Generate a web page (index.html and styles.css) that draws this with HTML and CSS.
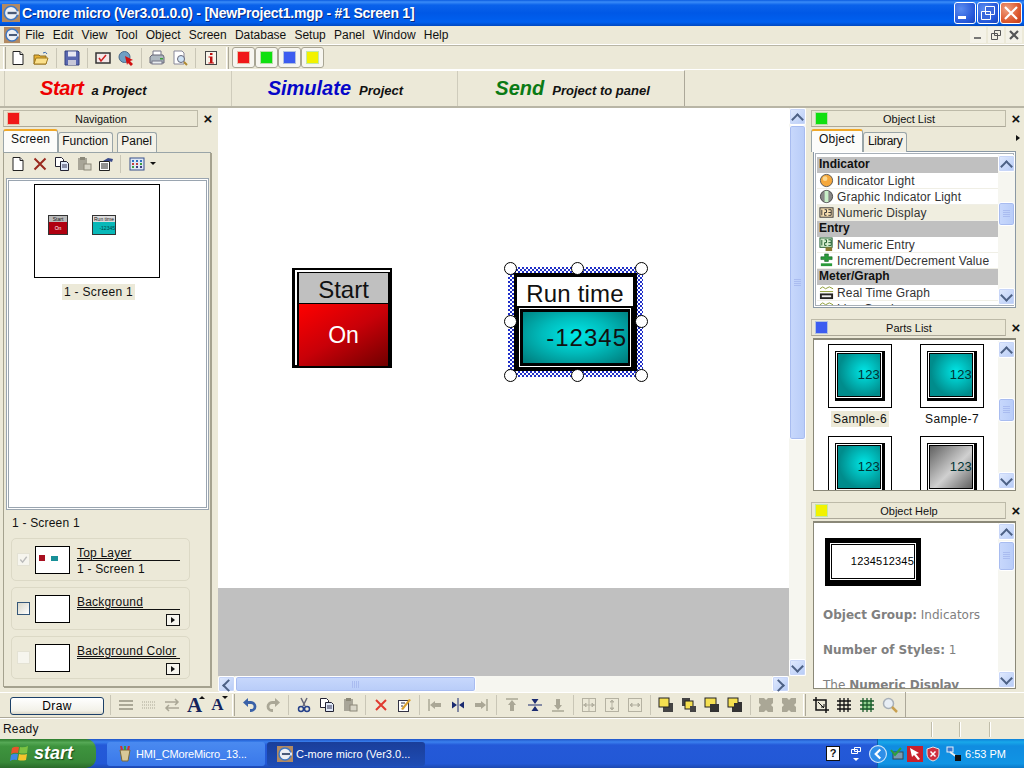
FILE: index.html
```html
<!DOCTYPE html>
<html>

<head>
	<title>C-more micro</title>
	<link rel="stylesheet" href="styles.css">
</head>

<body>
	<svg class="defs" width="0" height="0">
		<symbol id="i-cmore" viewBox="0 0 16 16"><rect width="16" height="16" fill="#b28a63"/><circle cx="8" cy="8" r="6" fill="#eef0f4" stroke="#3f78c4" stroke-width="1.500"/><rect x="4" y="6.500" width="11" height="3" fill="#dfe6f2"/><rect x="5" y="7" width="8" height="2" fill="#4a5a78"/></symbol>
		<symbol id="i-new" viewBox="0 0 16 16"><path d="M3 1.500h7l3 3v10H3z" fill="#fff" stroke="#222"/><path d="M10 1.500v3h3" fill="#ddd" stroke="#222"/></symbol>
		<symbol id="i-open" viewBox="0 0 16 16"><path d="M1 5h5l1 1h6v8H1z" fill="#e8b030" stroke="#8a6a20"/><path d="M3 8h12l-2 6H1z" fill="#fbe08a" stroke="#a07a20"/><path d="M10 3q3-2 4 1" fill="none" stroke="#3a6ab0"/></symbol>
		<symbol id="i-save" viewBox="0 0 16 16"><path d="M1 1h13l1 1v13H1z" fill="#5a68b0" stroke="#34407f"/><rect x="4" y="1.500" width="8" height="5" fill="#e8e8f2"/><rect x="4" y="10" width="8" height="5" fill="#c8c8d8"/></symbol>
		<symbol id="i-check" viewBox="0 0 16 16"><rect x="1" y="3" width="14" height="10" fill="#f3e8e8" stroke="#333" stroke-width="1.500"/><path d="M4 8l2 3 5-6" fill="none" stroke="#d02020" stroke-width="1.500"/></symbol>
		<symbol id="i-cursor" viewBox="0 0 16 16"><circle cx="6.500" cy="7" r="5.500" fill="#6f9fc4" stroke="#4a6a8a"/><path d="M7 6l8 4-3 1 3 3-2 2-3-3-1 2z" fill="#d01010"/></symbol>
		<symbol id="i-print" viewBox="0 0 16 16"><path d="M4 1h8v5H4z" fill="#fff" stroke="#778"/><path d="M1 7l2-2h11l1 2v6H1z" fill="#aeb8c0" stroke="#667"/><rect x="3" y="11" width="10" height="3" fill="#e8ecef" stroke="#778"/><rect x="11" y="8" width="3" height="1.500" fill="#3aa03a"/></symbol>
		<symbol id="i-preview" viewBox="0 0 16 16"><path d="M2 1h8l2 2v11H2z" fill="#fff" stroke="#889"/><circle cx="9" cy="9" r="3.500" fill="#cfe3f5" stroke="#667"/><path d="M12 12l3 3" stroke="#b08a30" stroke-width="2"/></symbol>
		<symbol id="i-info" viewBox="0 0 16 16"><rect x="2.500" y="1.500" width="11" height="13" fill="#f8f4ea" stroke="#444"/><rect x="7" y="3" width="2.500" height="2" fill="#c01010"/><path d="M5.500 6.500h4v6h1.500v1H5.500v-1H7v-5H5.500z" fill="#c01010"/></symbol>
		<symbol id="i-x" viewBox="0 0 16 16"><path d="M2.500 2.500l11 11M13.500 2.500l-11 11" stroke="#9a2a20" stroke-width="2"/></symbol>
		<symbol id="i-xred" viewBox="0 0 16 16"><path d="M3 3l10 10M13 3L3 13" stroke="#e03a30" stroke-width="2"/></symbol>
		<symbol id="i-copy" viewBox="0 0 16 16"><path d="M1.500 1.500h6l2 2v7h-8z" fill="#fff" stroke="#223"/><path d="M6.500 5.500h6l2 2v7h-8z" fill="#dfe8f8" stroke="#223"/><path d="M8 9h5M8 11h5" stroke="#335"/></symbol>
		<symbol id="i-paste" viewBox="0 0 16 16"><path d="M2 2h9v12H2z" fill="#a8a598"/><rect x="4" y="1" width="5" height="3" fill="#8b8878"/><rect x="8" y="8" width="7" height="6" fill="#d8d5c8" stroke="#8b8878"/></symbol>
		<symbol id="i-props" viewBox="0 0 16 16"><path d="M1.500 5.500h10v9h-10z" fill="#fff" stroke="#222"/><path d="M3 8h7M3 10h7M3 12h7" stroke="#222"/><path d="M5 5l5-3 5 1-1 3-3-1z" fill="#3a4a8a"/></symbol>
		<symbol id="i-view" viewBox="0 0 16 16"><rect x="1" y="2" width="14" height="12" fill="#dfe8f6" stroke="#38508a"/><path d="M3 5h2M7 5h2M11 5h2" stroke="#3070c0" stroke-width="2"/><path d="M3 8h2M7 8h2" stroke="#c04040" stroke-width="2"/><path d="M11 8h2M3 11h2" stroke="#40a040" stroke-width="2"/><path d="M7 11h2M11 11h2" stroke="#404080" stroke-width="2"/></symbol>
		<symbol id="i-lines" viewBox="0 0 16 16"><path d="M1 4h14M1 8h14M1 12h14" stroke="#aaa796" stroke-width="2"/></symbol>
		<symbol id="i-dots" viewBox="0 0 16 16"><path d="M1 5h14M1 8h14M1 11h14" stroke="#aaa796" stroke-dasharray="1 1"/></symbol>
		<symbol id="i-swap" viewBox="0 0 16 16"><path d="M1 5h13M11 2l3 3-3 3M15 11H2M5 8l-3 3 3 3" fill="none" stroke="#aaa796" stroke-width="1.500"/></symbol>
		<symbol id="i-undo" viewBox="0 0 16 16"><path d="M4 5.500h5a4 4 0 0 1 0 8H8" fill="none" stroke="#3a62a8" stroke-width="2.800"/><path d="M6 1v9L1 5.500z" fill="#3a62a8"/></symbol>
		<symbol id="i-redo" viewBox="0 0 16 16"><path d="M12 5.500H7a4 4 0 0 0 0 8h1" fill="none" stroke="#aaa796" stroke-width="2.800"/><path d="M10 1v9l5-4.500z" fill="#aaa796"/></symbol>
		<symbol id="i-cut" viewBox="0 0 16 16"><path d="M5 1l4 8M11 1L7 9" stroke="#667" stroke-width="1.500"/><circle cx="5" cy="12" r="2.500" fill="none" stroke="#24408a" stroke-width="1.500"/><circle cx="11" cy="12" r="2.500" fill="none" stroke="#24408a" stroke-width="1.500"/></symbol>
		<symbol id="i-edit" viewBox="0 0 16 16"><rect x="2.500" y="3.500" width="10" height="11" fill="#fff" stroke="#334"/><path d="M5 12l8-10 2 1-8 10z" fill="#d8a030"/><path d="M5 6h4M5 9h2" stroke="#334"/></symbol>
		<symbol id="i-al" viewBox="0 0 16 16"><path d="M2 2v12" stroke="#aaa796" stroke-width="1.500"/><path d="M3 8l5-4v2h6v4H8v2z" fill="#aaa796"/></symbol>
		<symbol id="i-ac" viewBox="0 0 16 16"><path d="M8 1v14" stroke="#1a2a70"/><path d="M7 8L2 4.500v7zM9 8l5-3.500v7z" fill="#1a2a70"/></symbol>
		<symbol id="i-ar" viewBox="0 0 16 16"><path d="M14 2v12" stroke="#aaa796" stroke-width="1.500"/><path d="M13 8L8 4v2H2v4h6v2z" fill="#aaa796"/></symbol>
		<symbol id="i-at" viewBox="0 0 16 16"><path d="M2 2h12" stroke="#aaa796" stroke-width="1.500"/><path d="M8 3l4 5h-2v6H6V8H4z" fill="#aaa796"/></symbol>
		<symbol id="i-am" viewBox="0 0 16 16"><path d="M1 8h14" stroke="#1a2a70"/><path d="M8 7L4.500 2h7zM8 9l-3.500 5h7z" fill="#1a2a70"/></symbol>
		<symbol id="i-ab" viewBox="0 0 16 16"><path d="M2 14h12" stroke="#aaa796" stroke-width="1.500"/><path d="M8 13l4-5h-2V2H6v6H4z" fill="#aaa796"/></symbol>
		<symbol id="i-dc" viewBox="0 0 16 16"><rect x="1.500" y="1.500" width="13" height="13" fill="none" stroke="#b5b2a2"/><path d="M8 2v12M2 8h12M3 8l2-2v4zM13 8l-2-2v4z" stroke="#b5b2a2" fill="#b5b2a2"/></symbol>
		<symbol id="i-dv" viewBox="0 0 16 16"><rect x="1.500" y="1.500" width="13" height="13" fill="none" stroke="#b5b2a2"/><path d="M8 3v10M8 3L6 5h4zM8 13l-2-2h4z" stroke="#b5b2a2" fill="#b5b2a2"/></symbol>
		<symbol id="i-dh" viewBox="0 0 16 16"><rect x="1.500" y="1.500" width="13" height="13" fill="none" stroke="#b5b2a2"/><path d="M3 8h10M3 8l2-2v4zM13 8l-2-2v4z" stroke="#b5b2a2" fill="#b5b2a2"/></symbol>
		<symbol id="i-front" viewBox="0 0 16 16"><rect x="5" y="6" width="10" height="9" fill="#444"/><rect x="1" y="1" width="10" height="9" fill="#f5e050" stroke="#222"/></symbol>
		<symbol id="i-fwd" viewBox="0 0 16 16"><rect x="1" y="1" width="8" height="8" fill="#444"/><rect x="4" y="4" width="8" height="8" fill="#f5e050" stroke="#222"/><rect x="9" y="9" width="6" height="6" fill="#444"/></symbol>
		<symbol id="i-back" viewBox="0 0 16 16"><rect x="1" y="1" width="11" height="9" fill="#f5e050" stroke="#222"/><rect x="6" y="7" width="9" height="8" fill="#333"/></symbol>
		<symbol id="i-bwd" viewBox="0 0 16 16"><rect x="5" y="5" width="10" height="10" fill="#333"/><rect x="1" y="1" width="10" height="9" fill="#f5e050" stroke="#222"/><rect x="7" y="6" width="8" height="9" fill="#333"/></symbol>
		<symbol id="i-group" viewBox="0 0 16 16"><path d="M1 1h5l2 2 2-2h5v5l-2 2 2 2v5h-5l-2-2-2 2H1v-5l2-2-2-2z" fill="#aaa796"/></symbol>
		<symbol id="i-crop" viewBox="0 0 16 16"><path d="M3 0v13h13M0 3h13v13" fill="none" stroke="#111" stroke-width="1.500"/><path d="M5 5l6 6M8 10h3V7" fill="none" stroke="#111"/></symbol>
		<symbol id="i-grid" viewBox="0 0 16 16"><path d="M4 1v14M8 1v14M12 1v14M1 4h14M1 8h14M1 12h14" stroke="#111" stroke-width="1.300"/></symbol>
		<symbol id="i-gridg" viewBox="0 0 16 16"><rect x="3" y="3" width="10" height="10" fill="#8fd08f"/><path d="M4 1v14M8 1v14M12 1v14M1 4h14M1 8h14M1 12h14" stroke="#1c5a2c" stroke-width="1.300"/></symbol>
		<symbol id="i-zoom" viewBox="0 0 16 16"><circle cx="6.500" cy="6.500" r="5" fill="#e8eef5" stroke="#a8b0b8" stroke-width="1.500"/><path d="M10 10l5 5" stroke="#c8a050" stroke-width="2.500"/></symbol>
		<symbol id="i-light" viewBox="0 0 16 16"><circle cx="8" cy="8" r="6.500" fill="#f5a83c" stroke="#555"/><circle cx="6.500" cy="6" r="2.500" fill="#fcd890"/></symbol>
		<symbol id="i-glight" viewBox="0 0 16 16"><circle cx="8" cy="8" r="6.500" fill="#888" stroke="#444"/><rect x="6" y="2" width="4" height="12" fill="#c8f0c8"/></symbol>
		<symbol id="i-num" viewBox="0 0 16 16"><rect x="1" y="3" width="14" height="10" fill="#f8dfb0" stroke="#333"/><path d="M3 5v6M6 5h2v3H6v3h2M10 5h3v6h-3M10 8h3" fill="none" stroke="#333"/></symbol>
		<symbol id="i-entry" viewBox="0 0 16 16"><rect x="1" y="1" width="13" height="10" fill="#d8f0d0" stroke="#1c5a2c"/><path d="M3 3v6M6 3h2v3H6v3h2M10 3h3v6h-3M10 6h3" fill="none" stroke="#1c5a2c"/><rect x="7" y="11" width="7" height="4" fill="#8a7a30"/></symbol>
		<symbol id="i-incr" viewBox="0 0 16 16"><path d="M6 1h4v3h4v3h-4v2H6V7H2V4h4z" fill="#2a9a3a" stroke="#145a20" stroke-width=".6"/><rect x="2" y="11" width="12" height="3" fill="#2a9a3a"/></symbol>
		<symbol id="i-graph" viewBox="0 0 16 16"><path d="M1 4l3-2 3 2 4-2 4 2M1 7h14" fill="none" stroke="#8a9a30"/><rect x="1" y="9" width="14" height="6" fill="#222"/><rect x="3" y="11" width="10" height="2" fill="#eee"/></symbol>
		<symbol id="i-flag" viewBox="0 0 20 20"><path d="M2 4q3-2 7-1l-1 6q-4-1-7 1z" fill="#e8542c"/><path d="M10 3q4 1 8-1l-1 7q-4 1-8 0z" fill="#7cc242"/><path d="M1 11q3-2 7-1l-1 6q-4-1-7 1z" fill="#3f87e6"/><path d="M9 10q4 1 8 0l-1 6q-4 1-8 0z" fill="#f6c42c"/></symbol>
		<symbol id="i-hmi" viewBox="0 0 16 16"><path d="M3 4h10l-2 11H5z" fill="#d8c898" stroke="#7a6a3a"/><path d="M5 4L4 0M8 4V0M11 4l1-4" stroke-width="2" stroke="#d03030"/><path d="M8 4V0" stroke-width="2" stroke="#30a040"/></symbol>
		<symbol id="i-chev" viewBox="0 0 16 16"><circle cx="8" cy="8" r="7.500" fill="#2f8fe8" stroke="#cfe6fa"/><path d="M10 4L6 8l4 4" fill="none" stroke="#fff" stroke-width="2"/></symbol>
		<symbol id="i-shield" viewBox="0 0 16 16"><path d="M8 1l6 2v5q0 5-6 7-6-2-6-7V3z" fill="#d03040" stroke="#e8e0e0"/><path d="M5.500 5.500l5 5M10.500 5.500l-5 5" stroke="#fff" stroke-width="1.500"/></symbol>
		<symbol id="i-net" viewBox="0 0 16 16"><rect x="1" y="1" width="6" height="5" fill="#3a78d0" stroke="#e8f0f8"/><path d="M4 6l7 5" stroke="#eee" stroke-width="2"/><rect x="9" y="9" width="6" height="6" fill="#111"/></symbol>
		<symbol id="i-safe" viewBox="0 0 16 16"><rect x="4" y="6" width="10" height="7" fill="#7a9ab0" stroke="#345"/><path d="M2 4l4 5 6-7" fill="none" stroke="#2ca03c" stroke-width="2"/></symbol>
		<symbol id="i-arrowred" viewBox="0 0 16 16"><rect width="16" height="16" fill="#c8202c"/><path d="M3 2l9 5-3 1 4 5-2 1-4-5-2 2z" fill="#fff"/></symbol>
		<symbol id="i-restore" viewBox="0 0 10 16"><path d="M3.500 1.500h6v4h-6zM.500 3.500h6v4h-6z" fill="#2258d6" stroke="#fff"/><path d="M2 12h6l-3 3z" fill="#fff"/></symbol>
	</svg>

	<div class="window">
		<header class="titlebar">
			<svg class="ic"><use href="#i-cmore"/></svg>
			<span class="title-text">C-more micro (Ver3.01.0.0) - [NewProject1.mgp - #1 Screen 1]</span>
			<div class="win-btns">
				<button class="win-btn"><svg viewBox="0 0 20 20"><rect x="3" y="13" width="8" height="3" fill="#fff"/></svg></button>
				<button class="win-btn"><svg viewBox="0 0 20 20"><path d="M7.500 3.500h9v8h-9zM3.500 8.500h9v8h-9z" fill="#3a68dc" stroke="#fff"/></svg></button>
				<button class="win-btn win-close"><svg viewBox="0 0 20 20"><path d="M4 4l12 12M16 4L4 16" stroke="#fff" stroke-width="2.200"/></svg></button>
			</div>
		</header>

		<nav class="menubar">
			<svg class="ic menu-logo"><use href="#i-cmore"/></svg>
			<span>File</span><span>Edit</span><span>View</span><span>Tool</span><span>Object</span><span>Screen</span><span>Database</span><span>Setup</span><span>Panel</span><span>Window</span><span>Help</span>
			<div class="mdi-btns">
				<i class="mdi-btn"><svg viewBox="0 0 16 16"><rect x="4" y="10" width="7" height="2" fill="#777"/></svg></i>
				<i class="mdi-btn"><svg viewBox="0 0 16 16"><path d="M6.500 3.500h6v5h-6zM3.500 6.500h6v6h-6z" fill="#f2f0e4" stroke="#555"/></svg></i>
				<i class="mdi-btn"><svg viewBox="0 0 16 16"><path d="M4 4l8 8M12 4l-8 8" stroke="#555" stroke-width="2.200"/></svg></i>
			</div>
		</nav>

		<div class="toolbar toolbar-top">
			<i class="grip"></i>
			<span class="tb"><svg><use href="#i-new"/></svg></span>
			<span class="tb"><svg><use href="#i-open"/></svg></span>
			<i class="sep"></i>
			<span class="tb"><svg><use href="#i-save"/></svg></span>
			<i class="sep"></i>
			<span class="tb"><svg><use href="#i-check"/></svg></span>
			<span class="tb"><svg><use href="#i-cursor"/></svg></span>
			<i class="sep"></i>
			<span class="tb"><svg><use href="#i-print"/></svg></span>
			<span class="tb"><svg><use href="#i-preview"/></svg></span>
			<i class="sep"></i>
			<span class="tb"><svg><use href="#i-info"/></svg></span>
			<i class="grip grip-mid"></i>
			<span class="color-btn"><i class="swatch red"></i></span>
			<span class="color-btn"><i class="swatch green"></i></span>
			<span class="color-btn"><i class="swatch blue"></i></span>
			<span class="color-btn"><i class="swatch yellow"></i></span>
		</div>

		<div class="stepbar">
			<div class="step step-start"><b class="step-main c-red">Start</b><b class="step-sub">a Project</b></div>
			<div class="step"><b class="step-main c-blue">Simulate</b><b class="step-sub">Project</b></div>
			<div class="step step-send"><b class="step-main c-green">Send</b><b class="step-sub">Project to panel</b></div>
		</div>

		<main class="workspace">
			<aside class="dock dock-left">
				<div class="dock-head">
					<div class="dock-title"><i class="swatch red"></i><span>Navigation</span></div>
					<span class="dock-close">×</span>
				</div>
				<div class="tabs">
					<span class="tab active">Screen</span><span class="tab">Function</span><span class="tab">Panel</span>
				</div>
				<div class="nav-body">
					<div class="nav-tools">
						<svg><use href="#i-new"/></svg>
						<svg><use href="#i-x"/></svg>
						<svg><use href="#i-copy"/></svg>
						<svg><use href="#i-paste"/></svg>
						<svg><use href="#i-props"/></svg>
						<i class="nav-sep"></i>
						<svg><use href="#i-view"/></svg>
						<i class="caret-down"></i>
					</div>
					<div class="screen-list">
						<div class="thumb-big">
							<div class="mini mini-start"><span>Start</span><b>On</b></div>
							<div class="mini mini-run"><span>Run time</span><b>-12345</b></div>
						</div>
						<span class="thumb-label">1 - Screen 1</span>
					</div>
					<div class="current-screen">1 - Screen 1</div>
					<div class="layer-card">
						<i class="check check-on"><svg viewBox="0 0 12 12"><path d="M2.500 6l2.500 3 4.500-6" fill="none" stroke="#bbb" stroke-width="1.500"/></svg></i>
						<div class="layer-thumb layer-thumb-top"><i class="dot-red"></i><i class="dot-teal"></i></div>
						<div class="layer-info"><u>Top Layer</u><span>1 - Screen 1</span></div>
					</div>
					<div class="layer-card">
						<i class="check check-blue"></i>
						<div class="layer-thumb"></div>
						<div class="layer-info"><u>Background</u><i class="more-btn"></i></div>
					</div>
					<div class="layer-card">
						<i class="check"></i>
						<div class="layer-thumb"></div>
						<div class="layer-info"><u>Background Color</u><i class="more-btn"></i></div>
					</div>
				</div>
			</aside>

			<section class="canvas-wrap">
				<div class="canvas-row">
					<div class="canvas-view">
						<div class="screen">
							<div class="obj-start">
								<div class="obj-start-head">Start</div>
								<div class="obj-start-body">On</div>
							</div>
							<div class="obj-select">
								<div class="obj-run">
									<div class="obj-run-head">Run time</div>
									<div class="obj-run-frame"><div class="obj-run-body">-12345</div></div>
								</div>
								<i class="handle h-tl"></i><i class="handle h-tc"></i><i class="handle h-tr"></i>
								<i class="handle h-ml"></i><i class="handle h-mr"></i>
								<i class="handle h-bl"></i><i class="handle h-bc"></i><i class="handle h-br"></i>
							</div>
						</div>
						<div class="offscreen"></div>
					</div>
					<div class="sb sb-canvas">
						<i class="sb-btn sb-up"></i>
						<div class="sb-track"><i class="sb-thumb"></i></div>
						<i class="sb-btn sb-down"></i>
					</div>
				</div>
				<div class="hsb">
					<i class="sb-btn sb-left"></i>
					<div class="hsb-track"><i class="hsb-thumb"></i></div>
					<i class="sb-btn sb-right"></i>
					<i class="hsb-corner"></i>
				</div>
			</section>

			<aside class="dock dock-right">
				<div class="dock-head">
					<div class="dock-title"><i class="swatch green"></i><span>Object List</span></div>
					<span class="dock-close">×</span>
				</div>
				<div class="tabs tabs-right">
					<span class="tab active">Object</span><span class="tab">Library</span>
					<i class="caret-right"></i>
				</div>
				<div class="list-box">
					<div class="list-rows">
						<div class="group">Indicator</div>
						<div class="row"><svg><use href="#i-light"/></svg>Indicator Light</div>
						<div class="row"><svg><use href="#i-glight"/></svg>Graphic Indicator Light</div>
						<div class="row row-sel"><svg><use href="#i-num"/></svg>Numeric Display</div>
						<div class="group">Entry</div>
						<div class="row"><svg><use href="#i-entry"/></svg>Numeric Entry</div>
						<div class="row"><svg><use href="#i-incr"/></svg>Increment/Decrement Value</div>
						<div class="group">Meter/Graph</div>
						<div class="row"><svg><use href="#i-graph"/></svg>Real Time Graph</div>
						<div class="row"><svg><use href="#i-graph"/></svg>Line Graph</div>
					</div>
					<div class="sb sb-list">
						<i class="sb-btn sb-up"></i>
						<div class="sb-track"><i class="sb-thumb"></i></div>
						<i class="sb-btn sb-down"></i>
					</div>
				</div>

				<div class="dock-head dock-head-next">
					<div class="dock-title"><i class="swatch blue"></i><span>Parts List</span></div>
					<span class="dock-close">×</span>
				</div>
				<div class="parts-box">
					<div class="parts-grid">
						<div class="part">
							<div class="part-tile"><div class="part-face"><span>123</span></div></div>
							<span class="part-name part-name-sel">Sample-6</span>
						</div>
						<div class="part">
							<div class="part-tile"><div class="part-face"><span>123</span></div></div>
							<span class="part-name">Sample-7</span>
						</div>
						<div class="part">
							<div class="part-tile"><div class="part-face"><span>123</span></div></div>
						</div>
						<div class="part">
							<div class="part-tile"><div class="part-face part-face-gray"><span>123</span></div></div>
						</div>
					</div>
					<div class="sb sb-parts">
						<i class="sb-btn sb-up"></i>
						<div class="sb-track"><i class="sb-thumb"></i></div>
						<i class="sb-btn sb-down"></i>
					</div>
				</div>

				<div class="dock-head dock-head-help">
					<div class="dock-title"><i class="swatch yellow"></i><span>Object Help</span></div>
					<span class="dock-close">×</span>
				</div>
				<div class="help-box">
					<div class="help-text">
						<div class="help-sample"><div class="help-sample-in">1234512345</div></div>
						<p><b>Object Group:</b> Indicators</p>
						<p><b>Number of Styles:</b> 1</p>
						<p>The <b>Numeric Display</b></p>
					</div>
					<div class="sb sb-help">
						<i class="sb-btn sb-up"></i>
						<div class="sb-track"><i class="sb-thumb"></i></div>
						<i class="sb-btn sb-down"></i>
					</div>
				</div>
			</aside>
		</main>

		<div class="toolbar toolbar-bottom">
			<button class="draw-btn">Draw</button>
			<i class="sep"></i>
			<span class="tb"><svg><use href="#i-lines"/></svg></span>
			<span class="tb"><svg><use href="#i-dots"/></svg></span>
			<span class="tb"><svg><use href="#i-swap"/></svg></span>
			<span class="tb tb-font">A<i class="up"></i></span>
			<span class="tb tb-font tb-font-small">A<i class="down"></i></span>
			<i class="grip grip-mid2"></i>
			<span class="tb"><svg><use href="#i-undo"/></svg></span>
			<span class="tb"><svg><use href="#i-redo"/></svg></span>
			<i class="sep"></i>
			<span class="tb"><svg><use href="#i-cut"/></svg></span>
			<span class="tb"><svg><use href="#i-copy"/></svg></span>
			<span class="tb"><svg><use href="#i-paste"/></svg></span>
			<i class="sep"></i>
			<span class="tb"><svg><use href="#i-xred"/></svg></span>
			<span class="tb"><svg><use href="#i-edit"/></svg></span>
			<i class="sep"></i>
			<span class="tb"><svg><use href="#i-al"/></svg></span>
			<span class="tb"><svg><use href="#i-ac"/></svg></span>
			<span class="tb"><svg><use href="#i-ar"/></svg></span>
			<i class="sep"></i>
			<span class="tb"><svg><use href="#i-at"/></svg></span>
			<span class="tb"><svg><use href="#i-am"/></svg></span>
			<span class="tb"><svg><use href="#i-ab"/></svg></span>
			<i class="sep"></i>
			<span class="tb"><svg><use href="#i-dc"/></svg></span>
			<span class="tb"><svg><use href="#i-dv"/></svg></span>
			<span class="tb"><svg><use href="#i-dh"/></svg></span>
			<i class="sep"></i>
			<span class="tb"><svg><use href="#i-front"/></svg></span>
			<span class="tb"><svg><use href="#i-fwd"/></svg></span>
			<span class="tb"><svg><use href="#i-back"/></svg></span>
			<span class="tb"><svg><use href="#i-bwd"/></svg></span>
			<i class="sep"></i>
			<span class="tb"><svg><use href="#i-group"/></svg></span>
			<span class="tb"><svg><use href="#i-group"/></svg></span>
			<i class="grip grip-mid2"></i>
			<span class="tb"><svg><use href="#i-crop"/></svg></span>
			<span class="tb"><svg><use href="#i-grid"/></svg></span>
			<span class="tb"><svg><use href="#i-gridg"/></svg></span>
			<span class="tb"><svg><use href="#i-zoom"/></svg></span>
			<i class="sep sep-end"></i>
		</div>

		<div class="statusbar">
			<span class="status-text">Ready</span>
			<i class="status-cell"></i><i class="status-cell status-mid"></i><i class="status-cell status-last"></i>
		</div>
	</div>

	<footer class="taskbar">
		<button class="start-btn"><svg class="start-flag"><use href="#i-flag"/></svg>start</button>
		<div class="task"><svg><use href="#i-hmi"/></svg>HMI_CMoreMicro_13...</div>
		<div class="task task-active"><svg><use href="#i-cmore"/></svg>C-more micro (Ver3.0...</div>
		<div class="task-tools">
			<span class="tool-help">?</span>
			<svg class="tool-restore"><use href="#i-restore"/></svg>
		</div>
		<div class="tray">
			<svg class="tray-chev"><use href="#i-chev"/></svg>
			<svg><use href="#i-safe"/></svg>
			<svg><use href="#i-arrowred"/></svg>
			<svg><use href="#i-shield"/></svg>
			<svg class="tray-net"><use href="#i-net"/></svg>
			<span class="clock">6:53 PM</span>
		</div>
	</footer>
</body>

</html>
```

FILE: styles.css
```css
* {
	box-sizing: border-box;
}

html,
body {
	margin: 0;
	height: 100%;
	overflow: hidden;
}

body {
	display: flex;
	flex-direction: column;
	width: 1024px;
	height: 768px;
	background: #ece9d8;
	font-family: "Liberation Sans", Arial, sans-serif;
	font-size: 12px;
	color: #111;
}

i {
	display: block;
	font-style: normal;
}

.defs {
	position: absolute;
}

.ic {
	width: 16px;
	height: 16px;
	flex: none;
}

.window {
	flex: none;
	height: 739px;
	display: flex;
	flex-direction: column;
}

/* title bar */
.titlebar {
	flex: none;
	height: 26px;
	display: flex;
	align-items: center;
	padding: 0 2px;
	color: #fff;
	background: linear-gradient(#0a5be0 0, #3a8cf8 2px, #0a62ea 5px, #0058e6 50%, #0060f0 85%, #0048c0 100%);
}

.titlebar .ic {
	width: 18px;
	height: 18px;
}

.title-text {
	margin-left: 2px;
	font-size: 14px;
	font-weight: bold;
	letter-spacing: -.23px;
	white-space: nowrap;
	text-shadow: 1px 1px 0 #0a2a80;
}

.win-btns {
	margin-left: auto;
	display: flex;
	gap: 1px;
}

.win-btn {
	width: 22px;
	height: 22px;
	padding: 0;
	display: flex;
	align-items: center;
	justify-content: center;
	border: 1px solid #fff;
	border-radius: 3px;
	background: radial-gradient(circle at 30% 30%, #5a8cf0, #2456d8 70%, #1c46b8);
}

.win-btn svg {
	width: 20px;
	height: 20px;
}

.win-close {
	background: radial-gradient(circle at 30% 30%, #f0a080, #dd5a30 60%, #c03a18);
}

/* menu */
.menubar {
	flex: none;
	height: 19px;
	display: flex;
	align-items: center;
	gap: 8.200px;
	padding-left: 4px;
	border-bottom: 1px solid #fff;
	font-size: 12px;
}

.menu-logo {
	margin-right: -3px;
}

.mdi-btns {
	margin-left: auto;
	display: flex;
	gap: 2px;
	margin-right: 2px;
}

.mdi-btn {
	width: 16px;
	height: 16px;
	background: #f4f2e8;
}

.mdi-btn svg {
	display: block;
	width: 16px;
	height: 16px;
}

/* toolbars */
.toolbar {
	flex: none;
	display: flex;
	align-items: center;
}

.toolbar-top {
	height: 25px;
	padding-left: 3px;
	border-top: 1px solid #b8b5a5;
	border-bottom: 1px solid #fff;
}

.tb {
	flex: none;
	width: 23px;
	height: 20px;
	display: flex;
	align-items: center;
	justify-content: center;
}

.tb svg {
	width: 16px;
	height: 16px;
}

.sep {
	flex: none;
	width: 1px;
	height: 20px;
	margin: 0 3px 0 4px;
	background: #c9c6b6;
}

.sep-end {
	margin: 0 0 0 2px;
	height: 26px;
	background: #aca899;
}

.grip {
	flex: none;
	width: 3px;
	height: 22px;
	border-left: 1px solid #fff;
	border-right: 1px solid #aca899;
}

.grip-mid {
	margin: 0 3px 0 4px;
}

.grip-mid2 {
	margin: 0 3px;
}

.color-btn {
	flex: none;
	width: 23px;
	height: 21px;
	display: flex;
	align-items: center;
	justify-content: center;
	border: 1px solid #a8a594;
	border-radius: 3px;
	background: #f7f6f0;
}

.swatch {
	flex: none;
	width: 11px;
	height: 11px;
}

.red {
	background: #f01818;
	box-shadow: 0 0 0 1px #e8c0a8;
}

.green {
	background: #10e010;
	box-shadow: 0 0 0 1px #b8e0a8;
}

.blue {
	background: #3c5cf0;
	box-shadow: 0 0 0 1px #b0c0e0;
}

.yellow {
	background: #f2f200;
	box-shadow: 0 0 0 1px #c0e8a8;
}

/* start / simulate / send bar */
.stepbar {
	flex: none;
	height: 36px;
	width: 685px;
	padding-left: 4px;
	display: flex;
	border-right: 1px solid #aca899;
	border-top: 1px solid #fff;
}

.step {
	width: 227.500px;
	padding-left: 36px;
	display: flex;
	align-items: center;
	gap: 8px;
	border-left: 1px solid #cfccbc;
	font-style: italic;
}

.step-start {
	padding-left: 35px;
}

.step-send {
	padding-left: 37px;
}

.step-main {
	font-size: 20px;
}

.step-sub {
	font-size: 13px;
	margin-top: 3px;
}

.c-red {
	color: #ee0000;
	letter-spacing: -.4px;
}

.c-blue {
	color: #0606c8;
}

.c-green {
	color: #0a7a14;
}

/* workspace */
.workspace {
	flex: none;
	height: 586px;
	display: flex;
	border-top: 2px solid #b8b5a5;
}

.dock {
	flex: none;
	width: 218px;
}

.dock-left {
	padding: 2px 0 0 3px;
}

.dock-right {
	width: 218px;
	padding: 2px 0 0 5px;
}

.dock-head {
	height: 17px;
	display: flex;
	align-items: center;
}

.dock-title {
	width: 195px;
	height: 17px;
	display: flex;
	align-items: center;
	padding-left: 4px;
	border: 1px solid #bdbaa8;
	border-bottom-color: #aca899;
	background: #ebe8d6;
	font-size: 11px;
}

.dock-title span {
	flex: 1;
	text-align: center;
	padding-right: 14px;
}

.dock-close {
	margin-left: 4px;
	width: 12px;
	text-align: center;
	font-size: 15px;
	font-weight: bold;
	line-height: 15px;
}

.tabs {
	display: flex;
	height: 23px;
	margin-top: 2px;
	align-items: flex-end;
}

.tab {
	height: 20px;
	padding: 1px 4px 0 3px;
	margin-right: 2px;
	border: 1px solid #9aa5a8;
	border-bottom: 0;
	border-radius: 3px 3px 0 0;
	background: #f4f2e8;
}

.tab + .tab + .tab {
	margin-left: 2px;
}

.tab.active {
	height: 23px;
	padding: 1px 7px 0;
	margin-right: 0;
	border: 1px solid #9aa5a8;
	border-top: 2px solid #f0a828;
	border-bottom: 0;
	background: #fcfcfa;
	letter-spacing: .2px;
}

.tabs-right .tab + .tab {
	padding-left: 4px;
	letter-spacing: -.3px;
}

.caret-right {
	margin: 0 4px 11px auto;
	width: 0;
	height: 0;
	border: 3px solid transparent;
	border-left: 4px solid #111;
	border-right: 0;
}

/* navigation panel */
.nav-body {
	width: 208px;
	height: 535px;
	padding: 0 2px;
	border: 1px solid #a5a28f;
	border-top-color: #9aa5a8;
	box-shadow: 1px 1px 0 #a5a28f;
}

.nav-tools {
	height: 25px;
	display: flex;
	align-items: center;
	gap: 6px;
	padding: 0 0 4px 4px;
}

.nav-tools svg {
	width: 16px;
	height: 16px;
}

.nav-sep {
	width: 1px;
	height: 18px;
	background: #c9c6b6;
	margin: 0 2px 0 0;
}

.caret-down {
	width: 0;
	height: 0;
	border: 3px solid transparent;
	border-top: 3px solid #111;
	border-bottom: 0;
	margin-left: -1px;
}

.screen-list {
	width: 203px;
	height: 332px;
	display: flex;
	flex-direction: column;
	padding: 5px 0 0 27px;
	border: 1px solid #9aa5b0;
	box-shadow: inset 0 0 0 1px #fff, inset 0 0 0 2px #9aa5b0;
	background: #fff;
}

.thumb-big {
	position: relative;
	width: 126px;
	height: 94px;
	border: 1px solid #000;
	flex: none;
}

.mini {
	position: absolute;
	top: 30px;
	display: flex;
	flex-direction: column;
	border: 1px solid #333;
	font-size: 5px;
	text-align: center;
	overflow: hidden;
}

.mini b {
	font-weight: normal;
	flex: 1;
	color: #fff;
	line-height: 12px;
}

.mini-start {
	left: 13px;
	width: 20px;
	height: 20px;
	background: #bbb;
}

.mini-start b {
	background: #b00010;
}

.mini-run {
	left: 57px;
	width: 24px;
	height: 20px;
	background: #ddd;
}

.mini-run b {
	background: #08b8b8;
	color: #044;
	text-align: right;
}

.thumb-label {
	align-self: flex-start;
	margin: 6px 0 0 28px;
	padding: 1px 2px;
	background: #ece9d8;
	font-size: 12px;
	line-height: 14px;
	letter-spacing: .3px;
}

.current-screen {
	margin: 2px 0 0 6px;
	height: 22px;
	line-height: 22px;
	letter-spacing: .2px;
}

.layer-card {
	width: 179px;
	height: 43px;
	margin: 4px 0 6px 5px;
	display: flex;
	align-items: center;
	padding: 0 9px 0 5px;
	border: 1px solid #dcd9c6;
	border-radius: 5px;
}

.check {
	flex: none;
	width: 13px;
	height: 13px;
	border: 1px solid #e4e2d4;
	background: #f6f5ee;
}

.check-blue {
	border-color: #36587a;
	background: linear-gradient(135deg, #d8d6c8, #fff);
}

.layer-thumb {
	flex: none;
	position: relative;
	width: 35px;
	height: 28px;
	margin-left: 5px;
	border: 1px solid #000;
	background: #fff;
}

.dot-red {
	position: absolute;
	left: 3px;
	top: 8px;
	width: 6px;
	height: 6px;
	background: #a81020;
}

.dot-teal {
	position: absolute;
	left: 15px;
	top: 9px;
	width: 7px;
	height: 5px;
	background: #189098;
}

.layer-info {
	flex: 1;
	align-self: flex-start;
	margin: 7px 0 0 7px;
	height: 34px;
	display: flex;
	flex-direction: column;
	align-items: flex-start;
}

.layer-info u {
	width: 100%;
	height: 15px;
	line-height: 14px;
	border-bottom: 1px solid #111;
	text-decoration: underline;
	letter-spacing: .2px;
	white-space: nowrap;
}

.layer-info span {
	line-height: 16px;
	letter-spacing: .2px;
}

.more-btn {
	align-self: flex-end;
	position: relative;
	margin-top: 4px;
	width: 14px;
	height: 12px;
	border: 1px solid #111;
	background: #f6f5ee;
}

.more-btn::after {
	content: "";
	position: absolute;
	left: 4px;
	top: 2px;
	border: 3px solid transparent;
	border-left: 4px solid #111;
	border-right: 0;
}

/* canvas */
.canvas-wrap {
	flex: none;
	width: 588px;
	display: flex;
	flex-direction: column;
}

.canvas-row {
	flex: 1;
	display: flex;
	min-height: 0;
}

.canvas-view {
	width: 571px;
	display: flex;
	flex-direction: column;
	background: #c0c0c0;
}

.screen {
	position: relative;
	height: 480px;
	background: #fff;
}

.offscreen {
	flex: 1;
}

.obj-start {
	position: absolute;
	left: 74px;
	top: 160px;
	width: 100px;
	height: 100px;
	display: flex;
	flex-direction: column;
	padding: 5px 4px 5px 5px;
	background: #000;
	border-left: 2px solid #000;
}

.obj-start::before {
	content: "";
	position: absolute;
	left: 1px;
	top: 2px;
	width: 93px;
	height: 93px;
	border-top: 2px solid #fff;
	border-left: 2px solid #fff;
}

.obj-start-head {
	height: 30px;
	background: #c0c0c0;
	text-align: center;
	font-size: 24px;
	line-height: 33px;
}

.obj-start-body {
	flex: 1;
	margin-top: 1px;
	text-align: center;
	color: #fff;
	font-size: 23px;
	line-height: 62px;
	background: linear-gradient(150deg, #ff0000, #c80008 50%, #700000);
}

.obj-select {
	position: absolute;
	left: 290px;
	top: 159px;
	width: 135px;
	height: 110px;
	padding: 6px;
	background: repeating-conic-gradient(#2030c8 0 25%, #fff 0 50%) 0 0 / 4px 4px;
}

.obj-run {
	width: 123px;
	height: 98px;
	display: flex;
	flex-direction: column;
	padding: 4px 4px 4px 3px;
	background: #000;
}

.obj-run-head {
	height: 29px;
	flex: none;
	background: #fff;
	text-align: center;
	font-size: 24px;
	line-height: 33px;
	letter-spacing: .2px;
	white-space: nowrap;
	overflow: hidden;
}

.obj-run-frame {
	flex: 1;
	margin: 2px 2px 0;
	padding: 3px 2px 3px 3px;
	background: #000;
	border: 1px solid #fff;
	min-height: 0;
}

.obj-run-body {
	height: 100%;
	text-align: right;
	font-size: 24px;
	line-height: 51px;
	letter-spacing: 1px;
	padding-right: 1px;
	white-space: nowrap;
	overflow: hidden;
	background: radial-gradient(ellipse farthest-corner at 50% 45%, #00e8e8 0, #00bcbc 45%, #007878 100%);
}

.handle {
	position: absolute;
	width: 13px;
	height: 13px;
	border: 1.500px solid #000;
	border-radius: 50%;
	background: #fff;
}

.h-tl,
.h-tc,
.h-tr {
	top: -5px;
}

.h-ml,
.h-mr {
	top: 48px;
}

.h-bl,
.h-bc,
.h-br {
	top: 102px;
}

.h-tl,
.h-ml,
.h-bl {
	left: -4px;
}

.h-tc,
.h-bc {
	left: 63px;
}

.h-tr,
.h-mr,
.h-br {
	left: 127px;
}

/* scrollbars */
.sb {
	flex: none;
	width: 17px;
	display: flex;
	flex-direction: column;
	background: #f6f6f0;
}

.sb-btn {
	flex: none;
	position: relative;
	width: 17px;
	height: 17px;
	border: 1px solid #fff;
	border-radius: 2px;
	background: linear-gradient(135deg, #e2ebfe, #b6cbf6);
	box-shadow: inset 0 0 0 1px #c8d6f8;
}

.sb-up::after,
.sb-down::after,
.sb-left::after,
.sb-right::after {
	content: "";
	position: absolute;
	left: 3px;
	top: 4px;
	width: 7px;
	height: 7px;
	border: solid #4d6185;
	border-width: 2px 0 0 2px;
	transform: translateY(2px) rotate(45deg);
}

.sb-down::after {
	transform: translateY(-2px) rotate(225deg);
}

.sb-left::after {
	transform: translateX(2px) rotate(-45deg);
}

.sb-right::after {
	transform: translateX(-2px) rotate(135deg);
}

.sb-track {
	flex: 1;
	min-height: 0;
}

.sb-thumb {
	width: 17px;
	border: 1px solid #fff;
	border-radius: 3px;
	background: repeating-linear-gradient(#aabcf0 0 1px, transparent 1px 2px) center / 7px 8px no-repeat, linear-gradient(90deg, #c8d8fc, #b8ccf8);
	box-shadow: inset 0 0 0 1px #a8bcf0;
}

.sb-canvas .sb-thumb {
	height: 315px;
}

.hsb {
	flex: none;
	height: 16px;
	display: flex;
}

.hsb .sb-btn {
	height: 16px;
}

.hsb-track {
	width: 537px;
	background: #f6f6f0;
}

.hsb-thumb {
	width: 241px;
	height: 16px;
	border: 1px solid #fff;
	border-radius: 3px;
	background: repeating-linear-gradient(90deg, #aabcf0 0 1px, transparent 1px 2px) center / 8px 7px no-repeat, linear-gradient(#c8d8fc, #b8ccf8);
	box-shadow: inset 0 0 0 1px #a8bcf0;
}

.hsb-corner {
	flex: 1;
	background: #ece9d8;
}

/* right docks */
.list-box {
	width: 203px;
	height: 157px;
	margin: -1px 0 0 2px;
	padding: 3px 0 2px 3px;
	display: flex;
	border: 1px solid #8a98a4;
	box-shadow: inset 0 0 0 1px #fff, inset 0 0 0 2px #a8b0b8;
	background: #fff;
}

.list-rows {
	width: 181px;
	overflow: hidden;
	padding-top: 2px;
}

.group {
	height: 16px;
	padding-left: 2px;
	background: #c0c0c0;
	font-weight: bold;
	line-height: 15px;
}

.row {
	height: 16px;
	display: flex;
	align-items: center;
	gap: 3px;
	padding-left: 2px;
	border-bottom: 1px solid #f0efe6;
	color: #333;
	white-space: nowrap;
	letter-spacing: .15px;
}

.row svg {
	width: 15px;
	height: 15px;
	flex: none;
}

.row-sel {
	background: #f0eee0;
}

.sb-list .sb-thumb {
	height: 24px;
	margin-top: 30px;
}

.dock-head-next {
	margin-top: 11px;
}

.dock-head-help {
	margin-top: 11px;
}

.parts-box {
	width: 203px;
	height: 153px;
	margin: 2px 0 0 2px;
	display: flex;
	padding: 1px 0 1px 1px;
	border: 1px solid #8a8878;
	border-top-width: 2px;
	background: #fff;
	overflow: hidden;
}

.parts-grid {
	width: 183px;
	height: 150px;
	overflow: hidden;
	display: grid;
	grid-template-columns: 92px 92px;
	align-content: start;
	padding: 3px 0 0 13px;
}

.part {
	display: flex;
	flex-direction: column;
	align-items: center;
	width: 64px;
	height: 92px;
}

.part-tile {
	flex: none;
	width: 64px;
	height: 64px;
	padding: 6px;
	border: 1px solid #000;
	background: #fff;
}

.part-face {
	width: 50px;
	height: 50px;
	padding: 1px;
	border: 1px solid #000;
	border-right-width: 3px;
	border-bottom-width: 3px;
	background: #fff;
}

.part-face span {
	display: block;
	height: 100%;
	border: 1px solid #000;
	background: radial-gradient(circle farthest-corner at 62% 42%, #00e6e6, #008c8c 70%);
	font-size: 13px;
	text-align: right;
	line-height: 42px;
	letter-spacing: .2px;
	color: #033;
}

.part-face-gray span {
	background: linear-gradient(135deg, #606060, #d0d0d0 55%, #606060);
}

.part-name {
	margin-top: 3px;
	padding: 1px 2px;
	font-size: 12px;
	line-height: 14px;
	letter-spacing: .3px;
}

.part-name-sel {
	background: #ece9d8;
}

.sb-parts .sb-thumb {
	height: 24px;
	margin-top: 40px;
}

.help-box {
	width: 203px;
	height: 168px;
	margin: 2px 0 0 2px;
	display: flex;
	border: 1px solid #8a8878;
	border-top-width: 2px;
	background: #fff;
	overflow: hidden;
}

.help-text {
	width: 184px;
	height: 166px;
	padding: 15px 0 0 9px;
	font-family: "DejaVu Sans", Verdana, sans-serif;
	font-size: 12px;
	color: #808080;
	overflow: hidden;
}

.help-text p {
	margin: 0 0 20px;
	line-height: 15px;
	white-space: nowrap;
}

.help-sample {
	width: 96px;
	height: 48px;
	margin: 0 0 22px 2px;
	padding: 6px 6px 7px 6px;
	background: #000;
}

.help-sample-in {
	height: 100%;
	border: 1px solid #000;
	outline: 1px solid #fff;
	background: #fff;
	color: #000;
	font-family: "Liberation Sans", sans-serif;
	font-size: 11px;
	text-align: right;
	line-height: 32px;
	letter-spacing: .2px;
}

.sb-help .sb-thumb {
	height: 30px;
	margin-top: 1px;
}

/* bottom toolbar and status */
.toolbar-bottom {
	height: 26px;
	padding-left: 10px;
	border-top: 1px solid #fff;
	border-bottom: 1px solid #aca899;
}

.draw-btn {
	flex: none;
	width: 94px;
	height: 18px;
	margin-top: 1px;
	padding: 0;
	border: 1px solid #1c4068;
	border-radius: 3px;
	background: linear-gradient(#fff, #f2f1e8 80%, #dcd8c8);
	font-family: inherit;
	font-size: 12px;
	letter-spacing: .4px;
}

.toolbar-bottom .sep {
	margin-left: 6px;
	margin-right: 3px;
}

.toolbar-bottom .tb + .sep {
	margin-left: 4px;
}

.tb-font {
	position: relative;
	font-family: "Liberation Serif", serif;
	font-size: 21px;
	font-weight: bold;
	color: #14245c;
}

.tb-font-small {
	font-size: 17px;
}

.tb-font .up,
.tb-font .down {
	position: absolute;
	right: 1px;
	top: 1px;
	border: 3px solid transparent;
	border-bottom: 3px solid #111;
	border-top: 0;
}

.tb-font .down {
	border-top: 3px solid #111;
	border-bottom: 0;
}

.statusbar {
	flex: none;
	height: 21px;
	display: flex;
	align-items: center;
	border-top: 1px solid #fff;
}

.status-text {
	flex: 1;
	padding-left: 3px;
	letter-spacing: .2px;
}

.status-cell {
	width: 28px;
	height: 15px;
	border-left: 1px solid #fff;
	box-shadow: -1px 0 0 #c0bdaa;
}

.status-mid {
	width: 30px;
}

.status-last {
	width: 34px;
}

/* xp taskbar */
.taskbar {
	flex: none;
	height: 29px;
	display: flex;
	align-items: center;
	color: #fff;
	background: linear-gradient(#1f55c8 0, #3a80ee 3px, #2459d8 6px, #2258d6 85%, #1c48b0 100%);
	font-size: 11px;
}

.start-btn {
	flex: none;
	width: 96px;
	height: 29px;
	display: flex;
	align-items: center;
	gap: 4px;
	padding: 0 0 0 10px;
	border: 0;
	border-radius: 0 10px 10px 0;
	background: linear-gradient(#2c7c2c 0, #55a855 12%, #3e943e 25%, #388838 80%, #2a6a2a 100%);
	color: #fff;
	font-family: "Liberation Sans", sans-serif;
	font-size: 18px;
	font-style: italic;
	font-weight: bold;
	text-shadow: 1px 1px 1px #1a4a1a;
}

.start-flag {
	width: 20px;
	height: 20px;
}

.task {
	flex: none;
	width: 158px;
	height: 24px;
	margin-left: 2px;
	display: flex;
	align-items: center;
	gap: 3px;
	padding-left: 10px;
	border-radius: 3px;
	background: linear-gradient(#4a8af0, #3a78ea);
	white-space: nowrap;
}

.start-btn + .task {
	margin-left: 11px;
	letter-spacing: -.15px;
}

.task-active {
	background: linear-gradient(#1a3e9a, #1e4cb4);
}

.task svg {
	width: 16px;
	height: 16px;
	flex: none;
}

.task-tools {
	margin-left: auto;
	display: flex;
	align-items: center;
	gap: 11px;
	margin-right: 16px;
}

.tool-help {
	width: 14px;
	height: 15px;
	border: 1.500px solid #111;
	background: #fff;
	color: #111;
	font-size: 11px;
	font-weight: bold;
	text-align: center;
	line-height: 12px;
}

.tool-restore {
	width: 10px;
	height: 16px;
}

.tray {
	flex: none;
	width: 147px;
	height: 29px;
	display: flex;
	align-items: center;
	gap: 2px;
	background: linear-gradient(#0f80d8 0, #18a8ea 3px, #108ce0 7px, #1094e4 85%, #0a78c8 100%);
	border-left: 1px solid #0a60a8;
}

.tray svg {
	width: 16px;
	height: 16px;
	flex: none;
}

.tray .tray-chev {
	width: 18px;
	height: 18px;
	margin-left: -9px;
}

.tray .tray-net {
	margin-left: 3px;
}

.clock {
	margin-left: auto;
	margin-right: 18px;
	white-space: nowrap;
	font-size: 11px;
}
```
